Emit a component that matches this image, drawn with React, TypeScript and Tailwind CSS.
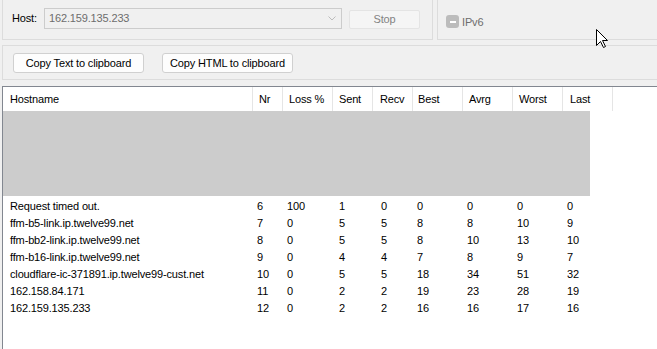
const cols = [
  { name: "Hostname", w: "w-[250px]", hp: "pl-[7px]", dp: "pl-[7px]" },
  { name: "Nr", w: "w-[30px]", hp: "pl-[6px]", dp: "pl-[4px]" },
  { name: "Loss %", w: "w-[50px]", hp: "pl-[6px]", dp: "pl-[4px]" },
  { name: "Sent", w: "w-[40px]", hp: "pl-[6px]", dp: "pl-[6px]" },
  { name: "Recv", w: "w-[40px]", hp: "pl-[7px]", dp: "pl-[8px]" },
  { name: "Best", w: "w-[50px]", hp: "pl-[5px]", dp: "pl-[4px]" },
  { name: "Avrg", w: "w-[50px]", hp: "pl-[6px]", dp: "pl-[4px]" },
  { name: "Worst", w: "w-[50px]", hp: "pl-[6px]", dp: "pl-[4px]" },
  { name: "Last", w: "w-[50px]", hp: "pl-[7px]", dp: "pl-[4px]" },
];

const rows = [
  ["Request timed out.", "6", "100", "1", "0", "0", "0", "0", "0"],
  ["ffm-b5-link.ip.twelve99.net", "7", "0", "5", "5", "8", "8", "10", "9"],
  ["ffm-bb2-link.ip.twelve99.net", "8", "0", "5", "5", "8", "10", "13", "10"],
  ["ffm-b16-link.ip.twelve99.net", "9", "0", "4", "4", "7", "8", "9", "7"],
  ["cloudflare-ic-371891.ip.twelve99-cust.net", "10", "0", "5", "5", "18", "34", "51", "32"],
  ["162.158.84.171", "11", "0", "2", "2", "19", "23", "28", "19"],
  ["162.159.135.233", "12", "0", "2", "2", "16", "16", "17", "16"],
];

export default function App() {
  return (
    <div className="relative w-[657px] h-[349px] overflow-hidden bg-[#f0f0f0] text-[11px] tracking-[-0.15px] text-black font-['Liberation_Sans',Arial,sans-serif] flex flex-col">
      {/* top groups */}
      <div className="flex h-[40px] shrink-0">
        <div className="ml-[2px] w-[431px] border-l border-r border-b border-[#dcdcdc] flex items-start pt-[8px]">
          <div className="w-[41px] h-[21px] pl-[9px] flex items-center">Host:</div>
          <div className="w-[298px] h-[21px] border border-[#cccccc] bg-[#f0f0f0] flex items-center">
            <span className="flex-1 pl-[4px] text-[#6d6d6d]">162.159.135.233</span>
            <div className="w-[19px] h-full flex items-center justify-center">
              <svg width="8" height="5" viewBox="0 0 8 5">
                <path d="M0.5 0.5 L4 4 L7.5 0.5" fill="none" stroke="#bcbcbc" strokeWidth="1" />
              </svg>
            </div>
          </div>
          <div className="ml-[7px] mt-[2px] w-[71px] h-[19px] border border-[#e4e4e4] bg-[#f5f5f5] rounded-[2px] flex items-center justify-center text-[#838383]">
            Stop
          </div>
        </div>
        <div className="ml-[4px] flex-1 border-l border-b border-[#dcdcdc] flex items-start pl-[8px] pt-[15px]">
          <div className="w-[13px] h-[13px] rounded-[3px] bg-[#bcbcbc] flex items-center justify-center">
            <div className="w-[6px] h-[2px] bg-white" />
          </div>
          <span className="ml-[3px] h-[13px] leading-[14px] text-[#6d6d6d]">IPv6</span>
        </div>
      </div>

      {/* buttons panel */}
      <div className="mt-[5px] ml-[2px] h-[35px] shrink-0 border-t border-b border-l border-[#dcdcdc] flex items-start pl-[10px] pt-[7px] gap-[18px]">
        <button className="w-[131px] h-[20px] rounded-[3px] border border-[#d0d0d0] bg-[#fdfdfd] flex items-center justify-center">
          Copy Text to clipboard
        </button>
        <button className="w-[131px] h-[20px] rounded-[3px] border border-[#d0d0d0] bg-[#fdfdfd] flex items-center justify-center">
          Copy HTML to clipboard
        </button>
      </div>

      {/* list view */}
      <div className="mt-[6px] ml-[2px] flex-1 border-t border-l border-[#828790] bg-white">
        <div className="flex h-[24px]">
          {cols.map((c) => (
            <div key={c.name} className={`${c.w} ${c.hp} h-full border-r border-[#e5e5e5] flex items-center`}>
              {c.name}
            </div>
          ))}
        </div>
        <div className="w-[587px] h-[85px] bg-[#cccccc]" />
        <div className="pt-[2px]">
          {rows.map((r) => (
            <div key={r[0]} className="flex h-[17px] items-center">
              {r.map((v, i) => (
                <div key={i} className={`${cols[i].w} ${cols[i].dp}`}>
                  {v}
                </div>
              ))}
            </div>
          ))}
        </div>
      </div>

      {/* mouse cursor */}
      <svg className="absolute left-[596px] top-[29px]" width="13" height="20" viewBox="0 0 13 20">
        <path d="M0.5 0.5 L0.5 16.5 L4.5 12.5 L7.5 18.5 L9.5 17.5 L6.5 11.5 L11.5 11.5 Z" fill="white" stroke="black" strokeWidth="1" />
      </svg>
    </div>
  );
}
